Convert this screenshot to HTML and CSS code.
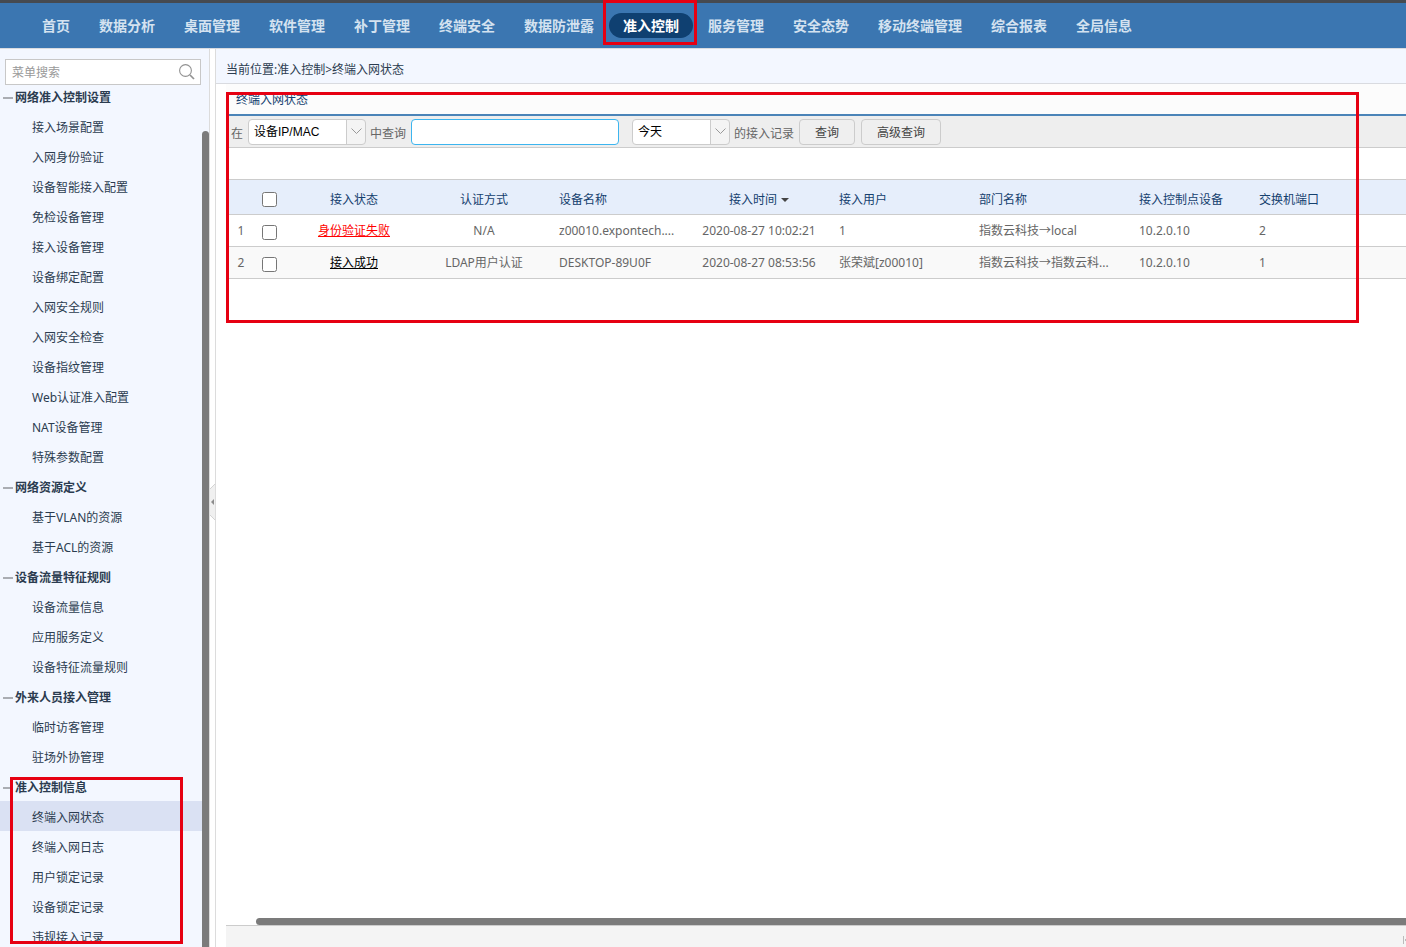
FILE: index.html
```html
<!DOCTYPE html>
<html lang="zh-CN">
<head>
<meta charset="utf-8">
<title>终端入网状态</title>
<link rel="stylesheet" href="styles.css">
</head>
<body>
<header class="topbar">
  <nav class="nav">
    <a href="#">首页</a>
    <a href="#">数据分析</a>
    <a href="#">桌面管理</a>
    <a href="#">软件管理</a>
    <a href="#">补丁管理</a>
    <a href="#">终端安全</a>
    <a href="#">数据防泄露</a>
    <a href="#" class="active">准入控制<span class="mark mark-nav"></span></a>
    <a href="#">服务管理</a>
    <a href="#">安全态势</a>
    <a href="#">移动终端管理</a>
    <a href="#">综合报表</a>
    <a href="#">全局信息</a>
  </nav>
</header>
<div class="body">
  <aside class="sidebar">
    <form class="search">
      <input type="text" placeholder="菜单搜索" aria-label="菜单搜索">
      <button type="button" aria-label="搜索"><svg width="16" height="16" viewBox="0 0 16 16" fill="none" stroke="#929292"><circle cx="6.5" cy="6.5" r="5.9" stroke-width="1.1"/><path d="M11 11l4 4" stroke-width="1.7"/></svg></button>
    </form>
    <div class="menu-area">
      <div class="menu">
        <section class="group"><h3>网络准入控制设置</h3>
          <a href="#">接入场景配置</a><a href="#">入网身份验证</a><a href="#">设备智能接入配置</a><a href="#">免检设备管理</a><a href="#">接入设备管理</a><a href="#">设备绑定配置</a><a href="#">入网安全规则</a><a href="#">入网安全检查</a><a href="#">设备指纹管理</a><a href="#">Web认证准入配置</a><a href="#">NAT设备管理</a><a href="#">特殊参数配置</a>
        </section>
        <section class="group"><h3>网络资源定义</h3>
          <a href="#">基于VLAN的资源</a><a href="#">基于ACL的资源</a>
        </section>
        <section class="group"><h3>设备流量特征规则</h3>
          <a href="#">设备流量信息</a><a href="#">应用服务定义</a><a href="#">设备特征流量规则</a>
        </section>
        <section class="group"><h3>外来人员接入管理</h3>
          <a href="#">临时访客管理</a><a href="#">驻场外协管理</a>
        </section>
        <section class="group"><h3>准入控制信息</h3>
          <a href="#" class="current">终端入网状态</a><a href="#">终端入网日志</a><a href="#">用户锁定记录</a><a href="#">设备锁定记录</a><a href="#">违规接入记录</a>
          <span class="mark mark-menu"></span>
        </section>
      </div>
      <div class="vbar"></div>
    </div>
  </aside>
  <button type="button" class="splitter" aria-label="收起菜单"><svg width="5" height="36" viewBox="0 0 5 36"><path d="M0 5L5 0V36L0 31Z" fill="#f0f0f0"/><path d="M0 5L5 0M0 31L5 36" stroke="#d4d4d4"/><path d="M1 18L4 15V21Z" fill="#8c8c8c"/></svg></button>
  <main class="main">
    <div class="crumb">当前位置:准入控制&gt;终端入网状态</div>
    <div class="panel">
      <h2 class="title">终端入网状态</h2>
      <form class="toolbar">
        <label for="field">在</label>
        <span class="pick pick-field"><select id="field"><option>设备IP/MAC</option></select><svg width="11" height="7" viewBox="0 0 11 7"><path d="M.5.5l5 5 5-5" fill="none" stroke="#999"/></svg></span>
        <label for="keyword">中查询</label>
        <input id="keyword" class="keyword" type="text">
        <span class="pick pick-day"><select id="day"><option>今天</option></select><svg width="11" height="7" viewBox="0 0 11 7"><path d="M.5.5l5 5 5-5" fill="none" stroke="#999"/></svg></span>
        <label for="day">的接入记录</label>
        <button type="button" class="btn">查询</button>
        <button type="button" class="btn btn-wide">高级查询</button>
      </form>
      <table class="grid">
        <colgroup><col class="c-num"><col class="c-check"><col class="c-status"><col class="c-auth"><col class="c-name"><col class="c-time"><col class="c-user"><col class="c-dept"><col class="c-point"><col class="c-port"></colgroup>
        <thead>
          <tr><th></th><th><input type="checkbox" aria-label="全选"></th><th class="mid">接入状态</th><th class="mid">认证方式</th><th class="name">设备名称</th><th class="mid">接入时间<span class="sort"></span></th><th>接入用户</th><th>部门名称</th><th>接入控制点设备</th><th>交换机端口</th></tr>
        </thead>
        <tbody>
          <tr><td class="mid">1</td><td><input type="checkbox" aria-label="选择第1行"></td><td class="mid"><a href="#" class="fail">身份验证失败</a></td><td class="mid">N/A</td><td class="name">z00010.expontech....</td><td class="mid">2020-08-27 10:02:21</td><td>1</td><td>指数云科技→local</td><td>10.2.0.10</td><td>2</td></tr>
          <tr><td class="mid">2</td><td><input type="checkbox" aria-label="选择第2行"></td><td class="mid"><a href="#" class="ok">接入成功</a></td><td class="mid">LDAP用户认证</td><td class="name">DESKTOP-89U0F</td><td class="mid">2020-08-27 08:53:56</td><td>张荣斌[z00010]</td><td>指数云科技→指数云科...</td><td>10.2.0.10</td><td>1</td></tr>
        </tbody>
      </table>
      <div class="space"></div>
      <div class="hbar"></div>
      <footer class="pager"><svg width="3" height="8" viewBox="0 0 3 8"><path d="M.5 0V8" stroke="#bbb"/><path d="M2 4L3 3V5Z" fill="#bbb" stroke="#bbb"/></svg></footer>
      <span class="mark mark-panel"></span>
    </div>
  </main>
</div>
</body>
</html>
```
FILE: styles.css
```css
* { box-sizing: border-box; }
body {
  margin: 0;
  height: 100vh;
  display: flex;
  flex-direction: column;
  overflow: hidden;
  background: #fff;
  color: #666;
  font: 12px/20px "Noto Sans", "Noto Sans CJK SC", sans-serif;
}
a { color: inherit; text-decoration: none; }
input, select, button { font: inherit; color: inherit; margin: 0; }
h2, h3 { margin: 0; font-size: 12px; }

.mark { position: absolute; border: 3px solid #e60012; pointer-events: none; z-index: 2; }
.mark-nav { top: -13px; bottom: -7px; left: -6px; right: -4px; }
.mark-menu { top: 6px; left: 10px; width: 173px; height: 167px; }
.mark-panel { top: 8px; left: 0; width: 1133px; height: 231px; }

.topbar {
  flex: none;
  height: 49px;
  border-top: 3px solid #464a50;
  border-bottom: 1px solid #d9dbe0;
  background: #3b76b1;
}
.nav { display: flex; gap: 1px; padding: 10px 28px; }
.nav a {
  position: relative;
  padding: 0 14px;
  border-radius: 13px;
  color: #d4e2f0;
  font-size: 14px;
  font-weight: bold;
  line-height: 25px;
  white-space: nowrap;
}
.nav .active { background: #0f4071; color: #fff; }

.body { flex: 1; display: flex; min-height: 0; }
.sidebar {
  flex: none;
  width: 210px;
  display: flex;
  flex-direction: column;
  border-right: 1px solid #dcdcdc;
  background: #f3f7ff;
  color: #2b3c50;
}
.search {
  flex: none;
  display: flex;
  height: 26px;
  margin: 10px 8px 0 5px;
  border: 1px solid #c8c8c8;
  background: #fff;
}
.search input { flex: 1; min-width: 0; padding: 2px 6px 0; border: 0; outline: 0; background: none; }
.search input::placeholder { color: #999; opacity: 1; }
.search button { display: flex; align-items: center; padding: 0 5px; border: 0; background: none; }
.menu-area { flex: 1; display: flex; min-height: 0; }
.menu { flex: 1; margin-top: -4px; overflow: hidden; }
.vbar { width: 7px; margin-top: 46px; border-radius: 4px 4px 0 0; background: #7b7b7b; }
.group { position: relative; }
.group h3, .group a { display: flex; align-items: center; height: 30px; padding-top: 3px; }
.group h3 { gap: 2px; padding-left: 3px; }
.group h3::before { content: ""; width: 10px; height: 2px; background: #aaadb3; }
.group a { padding-left: 32px; }
.group .current { background: #dae1f3; }

.splitter {
  flex: none;
  display: flex;
  align-items: center;
  width: 6px;
  padding: 8px 0 0;
  border: 0;
  border-right: 1px solid #dcdcdc;
  background: #fff;
}
.main { flex: 1; min-width: 0; display: flex; flex-direction: column; }
.crumb {
  flex: none;
  height: 35px;
  padding-left: 10px;
  border-bottom: 1px solid #d9dbe0;
  background: #f3f7ff;
  color: #2b3c50;
  line-height: 41px;
}
.panel {
  position: relative;
  flex: 1;
  min-height: 0;
  display: flex;
  flex-direction: column;
  margin-left: 10px;
}
.title {
  height: 32px;
  padding-left: 10px;
  border-bottom: 2px solid #4b84b8;
  background: #fcfcfc;
  color: #14406e;
  font-weight: normal;
  line-height: 32px;
}
.toolbar {
  display: flex;
  align-items: center;
  height: 32px;
  padding-left: 5px;
  border-bottom: 1px solid #ccc;
  background: #eee;
}
.toolbar label { padding-top: 4px; }
.pick { position: relative; display: flex; height: 26px; margin: 0 4px 0 5px; }
.pick-field { width: 118px; }
.pick-day { width: 98px; margin-left: 13px; }
.pick select {
  width: 100%;
  padding: 1px 24px 0 5px;
  border: 1px solid #ccc;
  border-radius: 4px;
  appearance: none;
  background: linear-gradient(to left, #f4f4f4 18px, #ccc 18px, #ccc 19px, #fff 19px);
  color: #000;
  font-family: "Liberation Sans", "Noto Sans CJK SC", sans-serif;
}
.pick svg { position: absolute; top: 9px; right: 4px; }
.keyword { width: 208px; height: 26px; margin-left: 5px; border: 1px solid #3db5ef; border-radius: 4px; background: #fff; outline: 0; }
.btn {
  width: 56px;
  height: 26px;
  margin-left: 5px;
  padding: 2px 0 0;
  border: 1px solid #ccc;
  border-radius: 4px;
  background: #efefef;
  color: #444;
}
.btn-wide { width: 80px; margin-left: 6px; }

.grid {
  width: 100%;
  margin-top: 31px;
  border-top: 1px solid #ccc;
  border-spacing: 0;
  table-layout: fixed;
}
.grid th, .grid td {
  height: 32px;
  padding: 0 0 0 10px;
  border-bottom: 1px solid #ccc;
  text-align: left;
  white-space: nowrap;
}
.grid th { height: 35px; padding-top: 5px; background: #e6eefb; color: #14406e; font-weight: normal; }
.grid .mid { padding-left: 0; text-align: center; }
.grid .name { padding-left: 15px; }
.grid tbody tr:nth-child(2) { background: #f9f9f9; }
.grid input { display: block; width: 15px; height: 15px; margin-left: -4px; }
.grid td input { margin-top: 4px; }
.grid td a { text-decoration: underline; }
.fail { color: #f00; }
.ok { color: #000; }
.sort { display: inline-block; margin-left: 4px; border: 4px solid transparent; border-top-color: #444; border-bottom: 0; vertical-align: middle; }
.c-num { width: 30px; }
.c-check { width: 28px; }
.c-status, .c-time, .c-user { width: 140px; }
.c-auth, .c-point { width: 120px; }
.c-name { width: 145px; }
.c-dept { width: 160px; }

.space { flex: 1; }
.hbar { height: 7px; margin-left: 30px; border-radius: 4px 0 0 4px; background: #7b7b7b; }
.pager { display: flex; justify-content: flex-end; height: 22px; padding-top: 10px; border-top: 1px solid #ccc; background: #f4f4f4; }
```
